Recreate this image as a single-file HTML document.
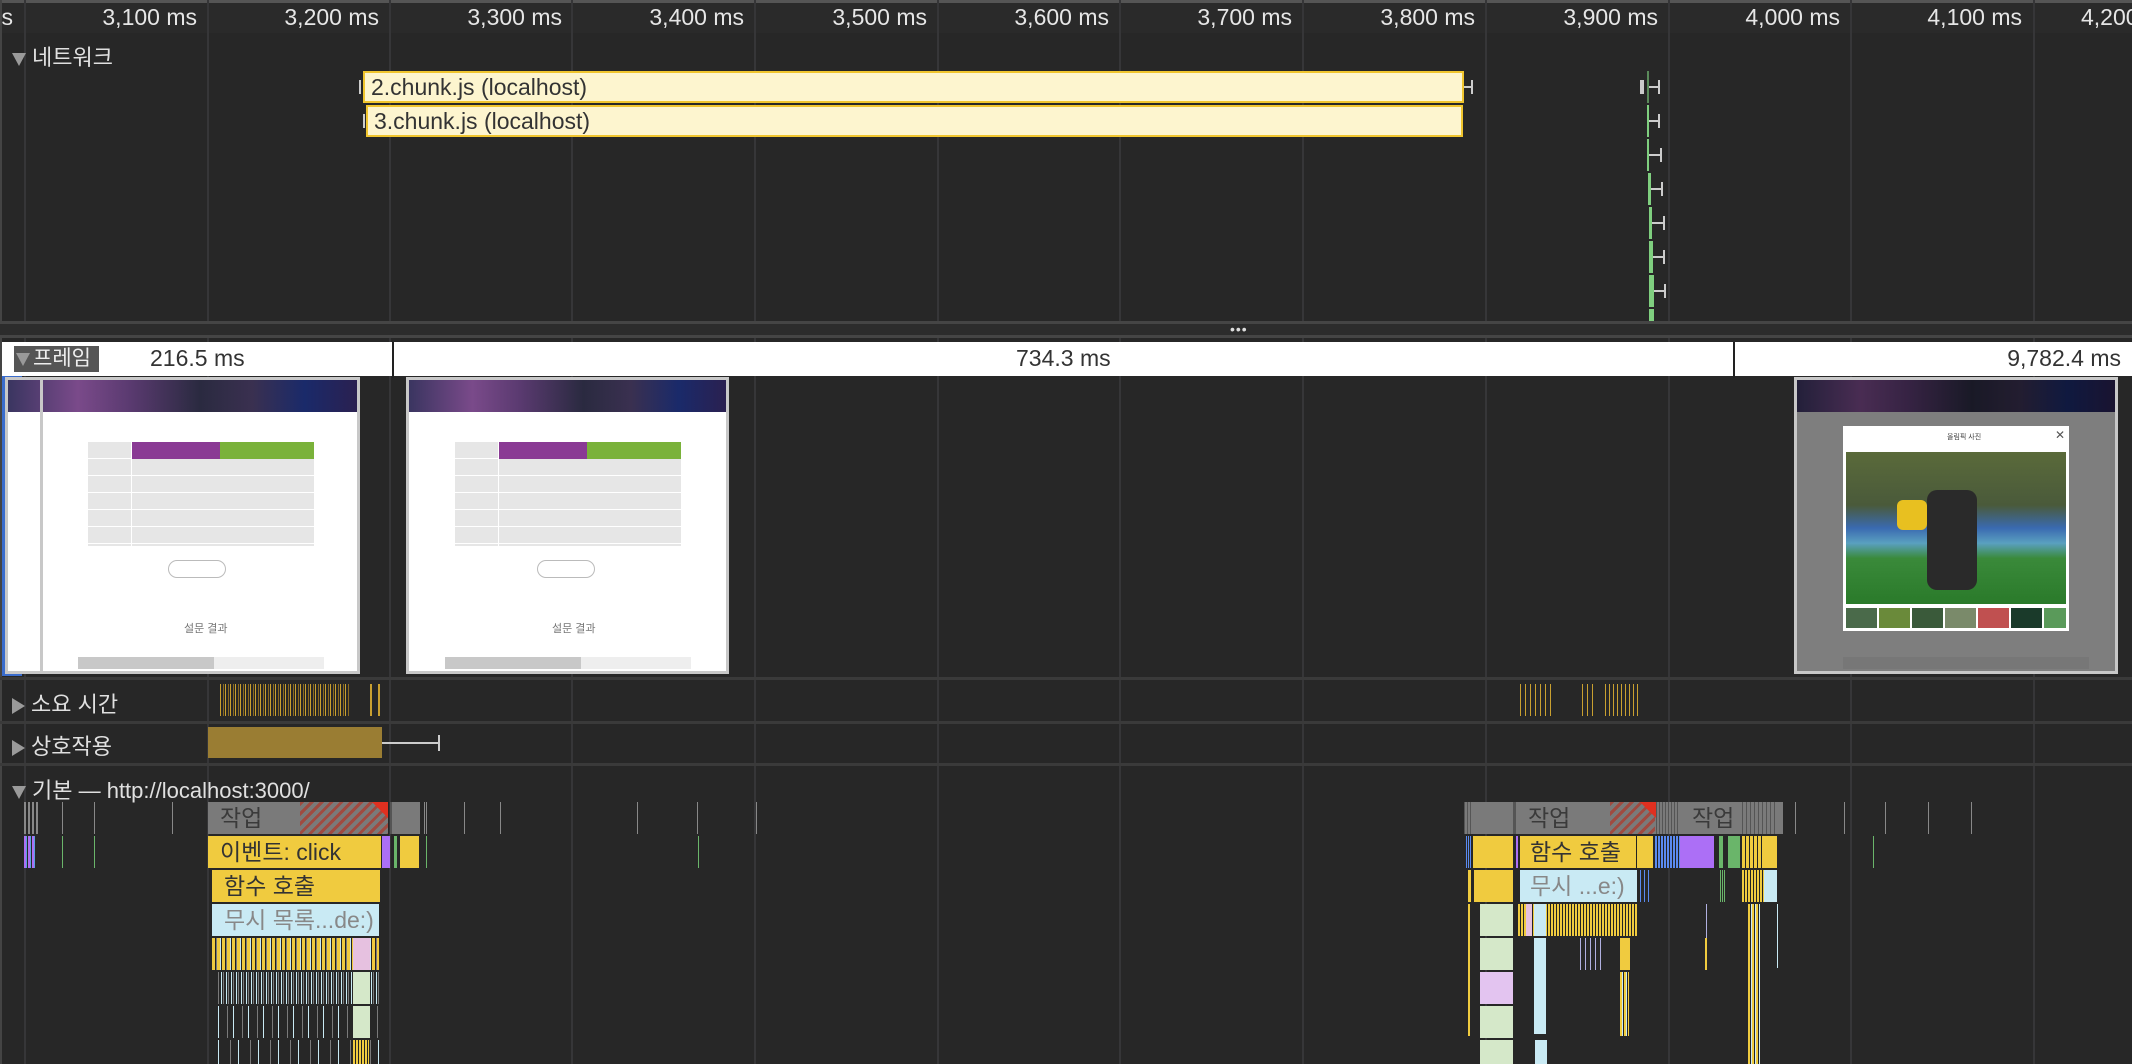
<!DOCTYPE html>
<html><head><meta charset="utf-8"><style>
*{margin:0;padding:0;box-sizing:border-box}
body{width:2132px;height:1064px;background:#272727;position:relative;overflow:hidden;font-family:"Liberation Sans","Noto Sans CJK KR",sans-serif;color:#ddd}
.a{position:absolute}
.g{position:absolute;top:0;width:2px;height:1064px;background:#363638}
.tk{position:absolute;top:4px;font-size:23px;color:#e6e6e6;text-align:right;width:170px}
.t{position:absolute;font-size:22px;color:#e0e0e0}
.tri{display:inline-block;width:0;height:0;border-left:7px solid transparent;border-right:7px solid transparent;border-top:13px solid #9a9a9a;margin-right:6px;vertical-align:middle}
.trr{display:inline-block;width:0;height:0;border-top:8px solid transparent;border-bottom:8px solid transparent;border-left:13px solid #9a9a9a;margin-right:6px;vertical-align:middle}
.sep{position:absolute;left:0;width:2132px;height:3px;background:#3a3a3a}
.bar{position:absolute;height:32px;font-size:23px;color:#333;padding-left:12px;line-height:32px;white-space:nowrap;overflow:hidden}
.y{background:#f0cb3f}.lb{background:#c9eaf4;color:#888}.gr{background:#7a7a7a;color:#3a3a3a}
.st{position:absolute;height:32px}
.th{position:absolute;background:#fff;border:3px solid #c8c8c8;overflow:hidden}
.ban{position:absolute;left:0;top:0;right:0;height:32px;background:linear-gradient(90deg,#3a3560,#7a4a8a 20%,#5a3a70 35%,#2a2a40 55%,#3a3050 70%,#1a2a6a 85%,#2a2050)}
.tbl{position:absolute;background:repeating-linear-gradient(180deg,#e6e6e6 0 16px,#fff 16px 17px)}
</style></head><body>
<div class="a" style="left:0;top:0;width:2132px;height:3px;background:#555"></div>
<div class="a" style="left:0;top:3px;width:2132px;height:30px;background:#2a2a2a"></div>
<div class="a" style="left:0;top:0;width:2px;height:1064px;background:#444"></div>
<div class="g" style="left:24px"></div><div class="g" style="left:207px"></div><div class="g" style="left:389px"></div><div class="g" style="left:571px"></div><div class="g" style="left:754px"></div><div class="g" style="left:937px"></div><div class="g" style="left:1119px"></div><div class="g" style="left:1302px"></div><div class="g" style="left:1485px"></div><div class="g" style="left:1668px"></div><div class="g" style="left:1850px"></div><div class="g" style="left:2033px"></div>
<div class="tk" style="left:-157px">3,000 ms</div>
<div class="tk" style="left:27px">3,100 ms</div>
<div class="tk" style="left:209px">3,200 ms</div>
<div class="tk" style="left:392px">3,300 ms</div>
<div class="tk" style="left:574px">3,400 ms</div>
<div class="tk" style="left:757px">3,500 ms</div>
<div class="tk" style="left:939px">3,600 ms</div>
<div class="tk" style="left:1122px">3,700 ms</div>
<div class="tk" style="left:1305px">3,800 ms</div>
<div class="tk" style="left:1488px">3,900 ms</div>
<div class="tk" style="left:1670px">4,000 ms</div>
<div class="tk" style="left:1852px">4,100 ms</div>
<div class="tk" style="left:2081px;text-align:left">4,200 ms</div>

<div class="t" style="left:12px;top:40px"><span class="tri"></span>네트워크</div>
<div class="a" style="left:363px;top:71px;width:1101px;height:32px;background:#fdf5cf;border:2px solid #f0c52e;font-size:23px;color:#333;line-height:28px;padding-left:6px">2.chunk.js (localhost)</div>
<div class="a" style="left:366px;top:105px;width:1097px;height:32px;background:#fdf5cf;border:2px solid #f0c52e;font-size:23px;color:#333;line-height:28px;padding-left:6px">3.chunk.js (localhost)</div>
<div class="a" style="left:359px;top:80px;width:2px;height:14px;background:#ccc"></div>
<div class="a" style="left:363px;top:114px;width:2px;height:14px;background:#ccc"></div>
<div class="a" style="left:1464px;top:86px;width:8px;height:2px;background:#ccc"></div><div class="a" style="left:1471px;top:80px;width:2px;height:14px;background:#ccc"></div>
<div class="a" style="left:1640px;top:80px;width:4px;height:14px;background:#ccc"></div>
<div class="a" style="left:1647px;top:71px;width:2px;height:32px;background:#5a8a5a"></div>
<div class="a" style="left:1649px;top:86px;width:10px;height:2px;background:#ccc"></div><div class="a" style="left:1658px;top:80px;width:2px;height:14px;background:#ccc"></div>
<div class="a" style="left:1647px;top:105px;width:2px;height:32px;background:#7fcf7f"></div><div class="a" style="left:1649px;top:120px;width:10px;height:2px;background:#ccc"></div><div class="a" style="left:1658px;top:114px;width:2px;height:14px;background:#ccc"></div>
<div class="a" style="left:1647px;top:139px;width:2px;height:32px;background:#7fcf7f"></div><div class="a" style="left:1649px;top:154px;width:12px;height:2px;background:#ccc"></div><div class="a" style="left:1660px;top:148px;width:2px;height:14px;background:#ccc"></div>
<div class="a" style="left:1648px;top:173px;width:3px;height:32px;background:#7fcf7f"></div><div class="a" style="left:1651px;top:188px;width:10px;height:2px;background:#ccc"></div><div class="a" style="left:1661px;top:182px;width:2px;height:14px;background:#ccc"></div>
<div class="a" style="left:1649px;top:207px;width:3px;height:32px;background:#7fcf7f"></div><div class="a" style="left:1652px;top:222px;width:11px;height:2px;background:#ccc"></div><div class="a" style="left:1663px;top:216px;width:2px;height:14px;background:#ccc"></div>
<div class="a" style="left:1649px;top:241px;width:4px;height:32px;background:#7fcf7f"></div><div class="a" style="left:1653px;top:256px;width:10px;height:2px;background:#ccc"></div><div class="a" style="left:1663px;top:250px;width:2px;height:14px;background:#ccc"></div>
<div class="a" style="left:1649px;top:275px;width:5px;height:32px;background:#7fcf7f"></div><div class="a" style="left:1654px;top:290px;width:10px;height:2px;background:#ccc"></div><div class="a" style="left:1664px;top:284px;width:2px;height:14px;background:#ccc"></div>
<div class="a" style="left:1649px;top:309px;width:5px;height:13px;background:#7fcf7f"></div>

<div class="a" style="left:0;top:321px;width:2132px;height:17px;background:#2c2c2c;border-top:3px solid #454545;border-bottom:3px solid #454545"></div>
<div class="a" style="left:1230px;top:324px;font-size:14px;color:#ddd;letter-spacing:1px;line-height:10px">•••</div>

<div class="a" style="left:2px;top:342px;width:2130px;height:34px;background:#fff"></div>
<div class="a" style="left:14px;top:346px;width:85px;height:26px;background:#555;color:#eee;font-size:21px;line-height:26px;padding-left:2px"><span class="tri" style="border-top-color:#999;margin-right:3px"></span>프레임</div>
<div class="a" style="left:150px;top:345px;font-size:23px;color:#333">216.5 ms</div>
<div class="a" style="left:392px;top:342px;width:2px;height:36px;background:#222"></div>
<div class="a" style="left:1016px;top:345px;font-size:23px;color:#333">734.3 ms</div>
<div class="a" style="left:1733px;top:342px;width:2px;height:36px;background:#222"></div>
<div class="a" style="left:1900px;top:345px;width:221px;text-align:right;font-size:23px;color:#333;white-space:nowrap">9,782.4 ms</div>
<div class="a" style="left:2px;top:376px;height:300px;border-left:4px solid #3a6ccc;border-top:3px solid #3a6ccc;border-bottom:3px solid #3a6ccc;width:20px"></div>

<div class="th" style="left:5px;top:377px;width:355px;height:297px">
 <div class="ban"></div>
 <div class="tbl" style="left:80px;top:62px;width:226px;height:104px"></div>
 <div class="a" style="left:124px;top:62px;width:88px;height:17px;background:#8a3a94"></div>
 <div class="a" style="left:212px;top:62px;width:94px;height:17px;background:#7ab23a"></div>
 <div class="a" style="left:123px;top:62px;width:1px;height:104px;background:#fff"></div>
 <div class="a" style="left:160px;top:180px;width:58px;height:18px;border:1px solid #bbb;border-radius:9px"></div>
 <div class="a" style="left:176px;top:240px;font-size:11px;color:#777">설문 결과</div>
 <div class="a" style="left:70px;top:277px;width:246px;height:12px;background:#eee"></div>
 <div class="a" style="left:70px;top:277px;width:136px;height:12px;background:#c8c8c8"></div>
 <div class="a" style="left:32px;top:0;width:3px;height:297px;background:#c8c8c8"></div>
</div>
<div class="th" style="left:406px;top:377px;width:323px;height:297px">
 <div class="ban"></div>
 <div class="tbl" style="left:46px;top:62px;width:226px;height:104px"></div>
 <div class="a" style="left:90px;top:62px;width:88px;height:17px;background:#8a3a94"></div>
 <div class="a" style="left:178px;top:62px;width:94px;height:17px;background:#7ab23a"></div>
 <div class="a" style="left:89px;top:62px;width:1px;height:104px;background:#fff"></div>
 <div class="a" style="left:128px;top:180px;width:58px;height:18px;border:1px solid #bbb;border-radius:9px"></div>
 <div class="a" style="left:143px;top:240px;font-size:11px;color:#777">설문 결과</div>
 <div class="a" style="left:36px;top:277px;width:246px;height:12px;background:#eee"></div>
 <div class="a" style="left:36px;top:277px;width:136px;height:12px;background:#c8c8c8"></div>
</div>
<div class="th" style="left:1794px;top:377px;width:324px;height:297px;background:#7e7e7e">
 <div class="ban" style="filter:brightness(.6)"></div>
 <div class="a" style="left:46px;top:46px;width:226px;height:205px;background:#fff"></div>
 <div class="a" style="left:150px;top:52px;font-size:7px;color:#444">올림픽 사진</div>
 <div class="a" style="left:258px;top:48px;font-size:12px;color:#555">✕</div>
 <div class="a" style="left:49px;top:72px;width:220px;height:152px;background:linear-gradient(180deg,#5a6a3a 0%,#4a5a3a 35%,#3a6ab0 50%,#5aa0c0 60%,#3a8a3a 70%,#2a7a2a 100%)"></div>
 <div class="a" style="left:130px;top:110px;width:50px;height:100px;background:#2a2a2a;border-radius:10px"></div>
 <div class="a" style="left:100px;top:120px;width:30px;height:30px;background:#e8c020;border-radius:6px"></div>
 <div class="a" style="left:49px;top:228px;width:220px;height:20px;background:linear-gradient(90deg,#4a6a4a 0 14%,#fff 14% 15%,#6a8a3a 15% 29%,#fff 29% 30%,#3a5a3a 30% 44%,#fff 44% 45%,#7a8a6a 45% 59%,#fff 59% 60%,#c05050 60% 74%,#fff 74% 75%,#1a3a2a 75% 89%,#fff 89% 90%,#5a9a5a 90%)"></div>
 <div class="a" style="left:46px;top:277px;width:246px;height:12px;background:#777"></div>
</div>

<div class="sep" style="top:677px"></div>
<div class="t" style="left:12px;top:687px"><span class="trr"></span>소요 시간</div>
<div class="a" style="left:220px;top:684px;width:130px;height:32px;background:repeating-linear-gradient(90deg,#c9a030 0 1px,transparent 1px 3px,#8a6a20 3px 4px,transparent 4px 5px)"></div>
<div class="a" style="left:370px;top:684px;width:2px;height:32px;background:#c9a030"></div><div class="a" style="left:378px;top:684px;width:2px;height:32px;background:#c9a030"></div>
<div class="a" style="left:1520px;top:684px;width:34px;height:32px;background:repeating-linear-gradient(90deg,#c9a030 0 1px,transparent 1px 5px)"></div>
<div class="a" style="left:1582px;top:684px;width:12px;height:32px;background:repeating-linear-gradient(90deg,#c9a030 0 1px,transparent 1px 5px)"></div>
<div class="a" style="left:1605px;top:684px;width:36px;height:32px;background:repeating-linear-gradient(90deg,#c9a030 0 1px,transparent 1px 4px)"></div>
<div class="sep" style="top:721px"></div>
<div class="t" style="left:12px;top:729px"><span class="trr"></span>상호작용</div>
<div class="a" style="left:208px;top:727px;width:174px;height:31px;background:#9a7d33"></div>
<div class="a" style="left:382px;top:742px;width:57px;height:2px;background:#ccc"></div><div class="a" style="left:438px;top:735px;width:2px;height:16px;background:#ccc"></div>
<div class="sep" style="top:763px"></div>
<div class="t" style="left:12px;top:773px"><span class="tri"></span>기본 — http://localhost:3000/</div>

<div class="a" style="left:24px;top:802px;width:14px;height:32px;background:repeating-linear-gradient(90deg,#888 0 2px,transparent 2px 4px)"></div>
<div class="a" style="left:62px;top:802px;width:1px;height:32px;background:#888"></div><div class="a" style="left:94px;top:802px;width:1px;height:32px;background:#888"></div><div class="a" style="left:172px;top:802px;width:1px;height:32px;background:#888"></div>
<div class="a" style="left:24px;top:836px;width:12px;height:32px;background:repeating-linear-gradient(90deg,#ac6ff6 0 2px,#5aa0e0 2px 3px,transparent 3px 4px)"></div>
<div class="a" style="left:62px;top:836px;width:1px;height:32px;background:#6ab56a"></div><div class="a" style="left:94px;top:836px;width:1px;height:32px;background:#6ab56a"></div>
<div class="bar gr" style="left:208px;top:802px;width:180px">작업</div>
<div class="a" style="left:300px;top:802px;width:88px;height:32px;background:repeating-linear-gradient(135deg,#a04a40 0 3px,#7a7a7a 3px 7px)"></div>
<div class="a" style="left:372px;top:802px;width:0;height:0;border-top:16px solid #e03020;border-left:16px solid transparent"></div>
<div class="a" style="left:390px;top:802px;width:30px;height:32px;background:#7a7a7a;border-left:2px solid #555"></div>
<div class="a" style="left:424px;top:802px;width:4px;height:32px;background:repeating-linear-gradient(90deg,#888 0 1px,transparent 1px 2px)"></div>
<div class="a" style="left:464px;top:802px;width:1px;height:32px;background:#888"></div><div class="a" style="left:500px;top:802px;width:1px;height:32px;background:#888"></div><div class="a" style="left:637px;top:802px;width:1px;height:32px;background:#888"></div><div class="a" style="left:697px;top:802px;width:1px;height:32px;background:#888"></div><div class="a" style="left:756px;top:802px;width:1px;height:32px;background:#888"></div>
<div class="bar y" style="left:208px;top:836px;width:173px">이벤트: click</div>
<div class="a" style="left:382px;top:836px;width:8px;height:32px;background:#ac6ff6"></div>
<div class="a" style="left:394px;top:836px;width:3px;height:32px;background:#6ab56a"></div>
<div class="a" style="left:400px;top:836px;width:19px;height:32px;background:#f0cb3f"></div>
<div class="a" style="left:426px;top:836px;width:1px;height:32px;background:#6ab56a"></div>
<div class="a" style="left:698px;top:836px;width:1px;height:32px;background:#6ab56a"></div>
<div class="bar y" style="left:212px;top:870px;width:168px">함수 호출</div>
<div class="bar lb" style="left:212px;top:904px;width:167px">무시 목록...de:)</div>
<div class="st" style="left:212px;top:938px;width:167px;background:repeating-linear-gradient(90deg,#f0cb3f 0 3px,#222 3px 4px,#7a7a7a 4px 5px,#f0cb3f 5px 8px,#c9eaf4 8px 9px,#222 9px 10px)"></div>
<div class="a" style="left:353px;top:938px;width:17px;height:32px;background:#e6c1e0"></div>
<div class="st" style="left:218px;top:972px;width:162px;background:repeating-linear-gradient(90deg,#7a7a7a 0 1px,transparent 1px 3px,#c9eaf4 3px 4px,transparent 4px 5px)"></div>
<div class="a" style="left:353px;top:972px;width:17px;height:32px;background:#d5e8c9"></div>
<div class="st" style="left:218px;top:1006px;width:162px;background:repeating-linear-gradient(90deg,#c9eaf4 0 1px,transparent 1px 9px,#7a7a7a 9px 10px,transparent 10px 15px)"></div>
<div class="a" style="left:353px;top:1006px;width:17px;height:32px;background:#d5e8c9"></div>
<div class="st" style="left:218px;top:1040px;width:162px;height:24px;background:repeating-linear-gradient(90deg,#c9eaf4 0 1px,transparent 1px 12px,#7a7a7a 12px 13px,transparent 13px 20px)"></div>
<div class="a" style="left:353px;top:1040px;width:16px;height:24px;background:repeating-linear-gradient(90deg,#f0cb3f 0 2px,#222 2px 3px)"></div>

<div class="a" style="left:1464px;top:802px;width:319px;height:32px;background:#7a7a7a"></div>
<div class="a" style="left:1464px;top:802px;width:8px;height:32px;background:repeating-linear-gradient(90deg,#555 0 1px,transparent 1px 3px)"></div>
<div class="a" style="left:1513px;top:802px;width:3px;height:32px;background:#555"></div>
<div class="bar" style="left:1516px;top:802px;width:90px;color:#3a3a3a;background:transparent">작업</div>
<div class="a" style="left:1610px;top:802px;width:45px;height:32px;background:repeating-linear-gradient(135deg,#a04a40 0 3px,#7a7a7a 3px 7px)"></div>
<div class="a" style="left:1640px;top:802px;width:0;height:0;border-top:16px solid #e03020;border-left:16px solid transparent"></div>
<div class="a" style="left:1656px;top:802px;width:22px;height:32px;background:repeating-linear-gradient(90deg,#555 0 1px,transparent 1px 3px)"></div>
<div class="bar" style="left:1680px;top:802px;width:60px;color:#3a3a3a;background:transparent">작업</div>
<div class="a" style="left:1742px;top:802px;width:36px;height:32px;background:repeating-linear-gradient(90deg,#555 0 1px,transparent 1px 4px)"></div>
<div class="a" style="left:1795px;top:802px;width:1px;height:32px;background:#888"></div><div class="a" style="left:1844px;top:802px;width:1px;height:32px;background:#888"></div><div class="a" style="left:1885px;top:802px;width:1px;height:32px;background:#888"></div><div class="a" style="left:1928px;top:802px;width:1px;height:32px;background:#888"></div><div class="a" style="left:1971px;top:802px;width:1px;height:32px;background:#888"></div>
<div class="a" style="left:1466px;top:836px;width:6px;height:32px;background:repeating-linear-gradient(90deg,#5a8af0 0 1px,transparent 1px 2px)"></div>
<div class="a" style="left:1473px;top:836px;width:40px;height:32px;background:#f0cb3f"></div>
<div class="a" style="left:1516px;top:836px;width:2px;height:32px;background:#ac6ff6"></div>
<div class="bar y" style="left:1520px;top:836px;width:133px;padding-left:10px">함수 호출</div>
<div class="a" style="left:1636px;top:836px;width:1px;height:32px;background:#222"></div>
<div class="a" style="left:1655px;top:836px;width:25px;height:32px;background:repeating-linear-gradient(90deg,#5a8af0 0 2px,#222 2px 3px)"></div>
<div class="a" style="left:1680px;top:836px;width:34px;height:32px;background:#ac6ff6"></div>
<div class="a" style="left:1719px;top:836px;width:4px;height:32px;background:#6ab56a"></div>
<div class="a" style="left:1728px;top:836px;width:12px;height:32px;background:#6ab56a"></div>
<div class="a" style="left:1742px;top:836px;width:35px;height:32px;background:repeating-linear-gradient(90deg,#f0cb3f 0 3px,#222 3px 4px)"></div>
<div class="a" style="left:1765px;top:836px;width:12px;height:32px;background:#f0cb3f"></div>
<div class="a" style="left:1873px;top:836px;width:1px;height:32px;background:#6ab56a"></div>
<div class="a" style="left:1468px;top:870px;width:3px;height:32px;background:#f0cb3f"></div>
<div class="a" style="left:1474px;top:870px;width:39px;height:32px;background:#f0cb3f"></div>
<div class="bar lb" style="left:1520px;top:870px;width:117px;padding-left:10px">무시 ...e:)</div>
<div class="a" style="left:1640px;top:870px;width:12px;height:32px;background:repeating-linear-gradient(90deg,#5a8af0 0 1px,transparent 1px 4px)"></div>
<div class="a" style="left:1720px;top:870px;width:5px;height:32px;background:repeating-linear-gradient(90deg,#6ab56a 0 1px,transparent 1px 2px)"></div>
<div class="a" style="left:1742px;top:870px;width:28px;height:32px;background:repeating-linear-gradient(90deg,#f0cb3f 0 2px,#222 2px 3px)"></div>
<div class="a" style="left:1764px;top:870px;width:13px;height:32px;background:#c9eaf4"></div>
<div class="a" style="left:1468px;top:904px;width:2px;height:132px;background:#f0cb3f"></div>
<div class="a" style="left:1480px;top:904px;width:33px;height:32px;background:#d5e8c9"></div>
<div class="a" style="left:1480px;top:938px;width:33px;height:32px;background:#d5e8c9"></div>
<div class="a" style="left:1480px;top:972px;width:33px;height:32px;background:#e3c4f0"></div>
<div class="a" style="left:1480px;top:1006px;width:33px;height:32px;background:#d5e8c9"></div>
<div class="a" style="left:1480px;top:1040px;width:33px;height:24px;background:#d5e8c9"></div>
<div class="st" style="left:1518px;top:904px;width:119px;background:repeating-linear-gradient(90deg,#f0cb3f 0 2px,#222 2px 3px,#f0cb3f 3px 5px,#222 5px 6px)"></div>
<div class="a" style="left:1526px;top:904px;width:6px;height:32px;background:#e6c1e0"></div>
<div class="a" style="left:1534px;top:904px;width:12px;height:32px;background:#c9eaf4"></div>
<div class="a" style="left:1534px;top:938px;width:12px;height:96px;background:#c9eaf4"></div>
<div class="a" style="left:1535px;top:1040px;width:12px;height:24px;background:#c9eaf4"></div>
<div class="a" style="left:1620px;top:938px;width:10px;height:32px;background:#f0cb3f"></div>
<div class="a" style="left:1620px;top:972px;width:9px;height:64px;background:repeating-linear-gradient(90deg,#f0cb3f 0 2px,#c9eaf4 2px 3px,#222 3px 4px)"></div>
<div class="a" style="left:1580px;top:938px;width:24px;height:32px;background:repeating-linear-gradient(90deg,#b0b0e0 0 1px,transparent 1px 5px)"></div>
<div class="a" style="left:1706px;top:904px;width:1px;height:64px;background:#b0b0e0"></div>
<div class="a" style="left:1705px;top:938px;width:2px;height:32px;background:#f0cb3f"></div>
<div class="a" style="left:1748px;top:904px;width:12px;height:160px;background:repeating-linear-gradient(90deg,#f0cb3f 0 2px,#222 2px 3px,#c9eaf4 3px 4px)"></div>
<div class="a" style="left:1777px;top:904px;width:1px;height:64px;background:#c9eaf4"></div>
</body></html>
